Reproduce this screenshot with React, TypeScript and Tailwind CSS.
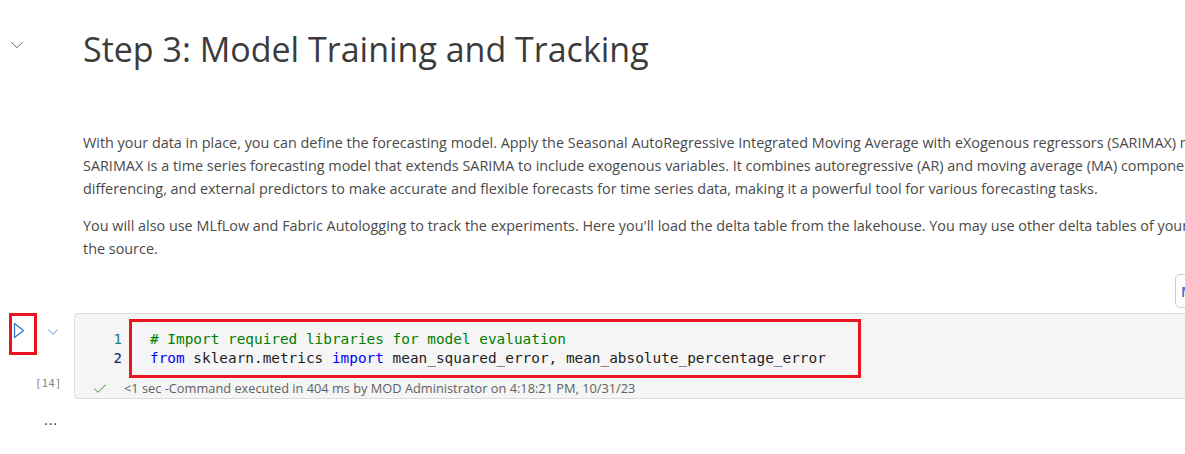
import { ChevronDown, Check } from 'lucide-react';

const sans = { fontFamily: '"Open Sans", "Noto Sans", sans-serif' };

function RunIcon() {
  return (
    <svg width="12" height="17" viewBox="0 0 12 17" fill="none">
      <path d="M1.5 1.5 L10.5 8.5 L1.5 15.5 Z" stroke="#2f7ad6" strokeWidth="1.3" strokeLinejoin="round" />
    </svg>
  );
}

function CodeCell() {
  return (
    <div className="flex">
      {/* gutter: run button, collapse chevron, execution count */}
      <div className="relative w-[74px] shrink-0">
        <div className="absolute left-[9px] top-0 flex h-[42px] w-[28px] items-start border-[3px] border-[#e8141f] pl-[1px] pt-[6px]">
          <RunIcon />
        </div>
        <ChevronDown className="absolute left-[44px] top-[10px] h-[18px] w-[18px] text-[#4a8ad8]" strokeWidth={1.2} />
        <span className="absolute left-[35px] top-[63px] text-[11px] text-[#8a8a8a] font-['DejaVu_Sans_Mono',monospace]">
          [14]
        </span>
      </div>

      <div className="h-[86px] min-w-[1200px] flex-1 rounded-l-[4px] border border-r-0 border-[#dcdcdc] bg-[#f5f5f5]">
        <div className="flex pt-[5px]">
          <div className="w-[54px] shrink-0 pr-[7px] pt-[11px] text-right text-[14px] leading-[19px] font-['DejaVu_Sans_Mono',monospace]">
            <div className="text-[#237893]">1</div>
            <div className="text-[#0b216f]">2</div>
          </div>
          <div className="h-[59px] w-[732px] border-[3px] border-[#e8141f] pl-[18px] pt-[8px] text-[14.4px] leading-[19px] whitespace-pre font-['DejaVu_Sans_Mono',monospace]">
            <div className="text-[#008000]"># Import required libraries for model evaluation</div>
            <div className="text-[#1e1e1e]">
              <span className="text-[#0000ff]">from</span> sklearn.metrics <span className="text-[#0000ff]">import</span> mean_squared_error, mean_absolute_percentage_error
            </div>
          </div>
        </div>
        <div className="flex items-center pl-[17px] pt-[1px]" style={sans}>
          <Check className="h-[16px] w-[16px] text-[#3f8a3a]" strokeWidth={1.5} />
          <span className="ml-[16px] text-[12.8px] text-[#616161]">
            &lt;1 sec -Command executed in 404 ms by MOD Administrator on 4:18:21 PM, 10/31/23
          </span>
        </div>
      </div>
    </div>
  );
}

export default function App() {
  return (
    <div className="relative h-[454px] w-[1185px] overflow-hidden bg-white" style={sans}>
      {/* markdown heading */}
      <div className="flex pt-[23px]">
        <div className="w-[83px] shrink-0 pl-[6px] pt-[11px]">
          <ChevronDown className="h-[22px] w-[22px] text-[#505a6a]" strokeWidth={1} />
        </div>
        <h1 className="whitespace-nowrap text-[34px] font-normal leading-[52px] text-[#3b3b3b]">
          Step 3: Model Training and Tracking
        </h1>
      </div>

      {/* description */}
      <div className="pl-[83px] pt-[56px] text-[14.4px] leading-[23px] text-[#4a4a4a] whitespace-nowrap">
        <p>
          With your data in place, you can define the forecasting model. Apply the Seasonal AutoRegressive Integrated Moving Average with eXogenous regressors (SARIMAX) model to this data.
          <br />
          SARIMAX is a time series forecasting model that extends SARIMA to include exogenous variables. It combines autoregressive (AR) and moving average (MA) components, seasonal
          <br />
          differencing, and external predictors to make accurate and flexible forecasts for time series data, making it a powerful tool for various forecasting tasks.
        </p>
        <p className="mt-[14px]">
          You will also use MLfLow and Fabric Autologging to track the experiments. Here you'll load the delta table from the lakehouse. You may use other delta tables of your choice as
          <br />
          the source.
        </p>
      </div>

      {/* cell toolbar button peeking from the right edge */}
      <div className="flex justify-end pt-[14px]">
        <div className="mr-[-20px] flex h-[34px] w-[30px] items-center rounded-[5px] border border-[#cfcfcf] bg-white pl-[5px]">
          <span className="text-[14px] font-semibold text-[#1f6fd6]">M</span>
        </div>
      </div>

      <div className="pt-[5px]">
        <CodeCell />
      </div>

      <div className="pl-[44px] pt-[14px] text-[14px] leading-[14px] tracking-[1px] text-[#333]">...</div>
    </div>
  );
}
